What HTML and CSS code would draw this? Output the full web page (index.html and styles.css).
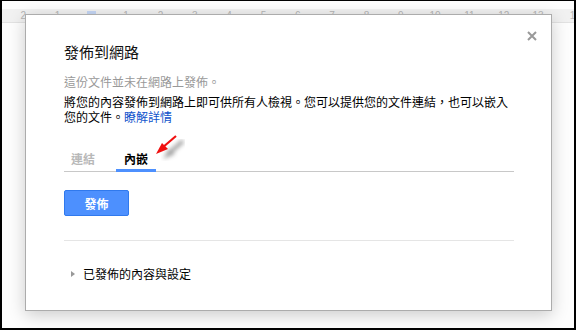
FILE: index.html
```html
<!DOCTYPE html>
<html lang="zh-Hant">

<head>
    <meta charset="UTF-8">
    <title>發佈到網路</title>
    <link rel="stylesheet" href="styles.css">
</head>

<body>
    <div class="frame">
        <div class="ruler">
            <span>2</span><span>1</span><span class="marker"></span><span>1</span><span>2</span><span>3</span>
            <span>4</span><span>5</span><span>6</span><span>7</span><span>8</span><span>9</span><span>10</span>
            <span>11</span><span>12</span><span>13</span><span>1</span>
        </div>

        <div class="dialog">
            <svg class="close" width="10" height="10" viewBox="0 0 10 10">
                <path d="M1 1 L9 9 M9 1 L1 9" stroke="#999" stroke-width="2"/>
            </svg>

            <h1>發佈到網路</h1>
            <p class="status">這份文件並未在網路上發佈。</p>
            <p class="desc">將您的內容發佈到網路上即可供所有人檢視。您可以提供您的文件連結，也可以嵌入您的文件。<a href="#">瞭解詳情</a></p>

            <div class="tabs">
                <span class="tab">連結</span>
                <span class="tab active">內嵌</span>
            </div>

            <button type="button">發佈</button>

            <div class="divider"></div>

            <div class="expander">
                <span class="triangle"></span>
                <span>已發佈的內容與設定</span>
            </div>

            <svg class="arrow" width="40" height="34" viewBox="0 0 40 34">
                <defs>
                    <filter id="blur"><feGaussianBlur stdDeviation="2.2"/></filter>
                </defs>
                <g filter="url(#blur)" opacity="0.55">
                    <path d="M28 6 L12 20" stroke="#555" stroke-width="4"/>
                    <path d="M8 24 L20 19 L14 14 Z" fill="#555"/>
                </g>
                <path d="M21 1 L7 13" stroke="#f01010" stroke-width="2.2"/>
                <path d="M1 19 L13 14 L7 8 Z" fill="#f01010"/>
            </svg>
        </div>
    </div>
</body>

</html>
```

FILE: styles.css
```css
body {
    margin: 0;
    font-family: "Liberation Sans", "Noto Sans CJK TC", sans-serif;
}

.frame {
    position: relative;
    box-sizing: border-box;
    width: 576px;
    height: 330px;
    border: 2px solid #000;
    border-top-width: 1px;
    background-color: #fdfdfd;
    overflow: hidden;
}

.ruler {
    display: flex;
    margin-top: 8px;
    height: 13px;
    padding-left: 4px;
    background-color: #f1f1f1;
    border-bottom: 1px solid #e2e2e2;
    font-size: 10px;
    line-height: 13px;
    color: #b5b5b5;
}

.ruler span {
    flex: 0 0 34.33px;
    text-align: center;
}

.ruler .marker {
    background: linear-gradient(#c5d6f5, #c5d6f5) no-repeat center 2px / 9px 4px;
}

.dialog {
    position: absolute;
    left: 23px;
    top: 13px;
    box-sizing: border-box;
    width: 527px;
    height: 297px;
    padding: 27px 37px 0 38px;
    background-color: #fff;
    border: 1px solid #acacac;
    box-shadow: 0 4px 16px rgba(0, 0, 0, 0.2);
    font-family: "Noto Sans CJK TC", sans-serif;
    font-size: 12px;
    color: #000;
}

.close {
    position: absolute;
    top: 16px;
    right: 14px;
}

h1 {
    margin: 0 0 12px;
    font-size: 15px;
    font-weight: normal;
    line-height: 20px;
    color: #111;
}

.status {
    margin: 0 0 4px;
    line-height: 16px;
    color: #999;
}

.desc {
    margin: 0;
    line-height: 15px;
}

.desc a {
    color: #1155cc;
    text-decoration: none;
}

.tabs {
    display: flex;
    margin-top: 27px;
    border-bottom: 1px solid #c8c8c8;
}

.tab {
    padding: 0 7px 2px;
    margin-right: 14px;
    margin-bottom: -1px;
    font-weight: bold;
    line-height: 16px;
    color: #b8b8b8;
    border-bottom: 3px solid transparent;
}

.tab.active {
    padding: 0 8px 2px;
    color: #000;
    border-bottom-color: #4d90fe;
}

button {
    display: block;
    margin-top: 18px;
    width: 65px;
    height: 26px;
    padding: 0;
    background-color: #4d90fe;
    border: 1px solid #3079ed;
    border-radius: 2px;
    color: #fff;
    font-family: inherit;
    font-size: 12px;
    font-weight: bold;
}

.divider {
    margin-top: 24px;
    border-top: 1px solid #e5e5e5;
}

.expander {
    display: flex;
    align-items: center;
    margin-top: 25px;
    line-height: 16px;
}

.triangle {
    width: 0;
    height: 0;
    margin: 0 8px 0 7px;
    border-top: 3px solid transparent;
    border-bottom: 3px solid transparent;
    border-left: 4px solid #999;
}

.arrow {
    position: absolute;
    left: 129px;
    top: 120px;
}
```
